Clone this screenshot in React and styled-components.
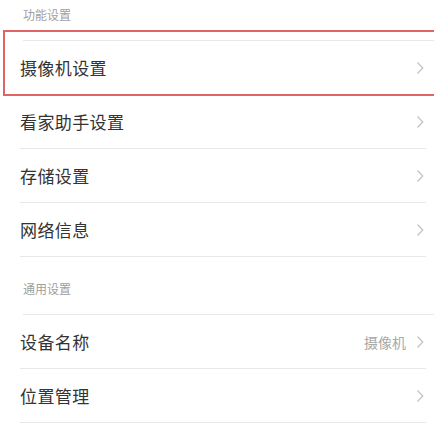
import React from "react";
import styled, { createGlobalStyle } from "styled-components";

const GlobalStyle = createGlobalStyle`
  html, body {
    margin: 0;
    padding: 0;
    background: #fff;
  }
  body {
    font-family: "Noto Sans CJK SC", "Noto Sans", sans-serif;
    -webkit-font-smoothing: antialiased;
  }
`;

const sections = [
  {
    title: "功能设置",
    items: [
      { label: "摄像机设置", highlight: true },
      { label: "看家助手设置" },
      { label: "存储设置" },
      { label: "网络信息" },
    ],
  },
  {
    title: "通用设置",
    items: [{ label: "设备名称", value: "摄像机" }, { label: "位置管理" }],
  },
];

export default function App() {
  return (
    <>
      <GlobalStyle />
      <Page>
        {sections.map((s, i) => (
          <section key={s.title}>
            <SectionTitle $top={i === 0 ? 6 : 23}>{s.title}</SectionTitle>
            {s.items.map((item) => (
              <Row key={item.label}>
                {item.highlight && <Highlight />}
                <Label>{item.label}</Label>
                <Right>
                  {item.value && <Value>{item.value}</Value>}
                  <Chevron />
                </Right>
              </Row>
            ))}
          </section>
        ))}
      </Page>
    </>
  );
}

function Chevron() {
  return (
    <svg width="8" height="14" viewBox="0 0 8 14">
      <polyline
        points="1.5,1.5 6.8,7 1.5,12.5"
        fill="none"
        stroke="#c2c2c2"
        strokeWidth="1.2"
      />
    </svg>
  );
}

const Page = styled.div`
  width: 434px;
  overflow: hidden;
`;

const SectionTitle = styled.div`
  margin-left: 23px;
  padding: ${(p) => p.$top}px 0 17px;
  font-size: 12px;
  line-height: 17px;
  color: #a0a0a0;
  border-bottom: 1px solid #e8e8e8;
`;

const Row = styled.div`
  position: relative;
  display: flex;
  align-items: center;
  justify-content: space-between;
  height: 54px;
  box-sizing: border-box;
  margin: 0 8px 0 20px;
  padding-right: 2px;
  border-bottom: 1px solid #e8e8e8;
`;

const Highlight = styled.div`
  position: absolute;
  top: -11px;
  left: -17px;
  right: -20px;
  bottom: -2px;
  border: 2px solid #e06464;
  pointer-events: none;
`;

const Label = styled.span`
  font-size: 17px;
  color: #333;
  letter-spacing: 0.4px;
`;

const Right = styled.div`
  display: flex;
  align-items: center;
  gap: 10px;
`;

const Value = styled.span`
  font-size: 14px;
  color: #a8a8a8;
`;
